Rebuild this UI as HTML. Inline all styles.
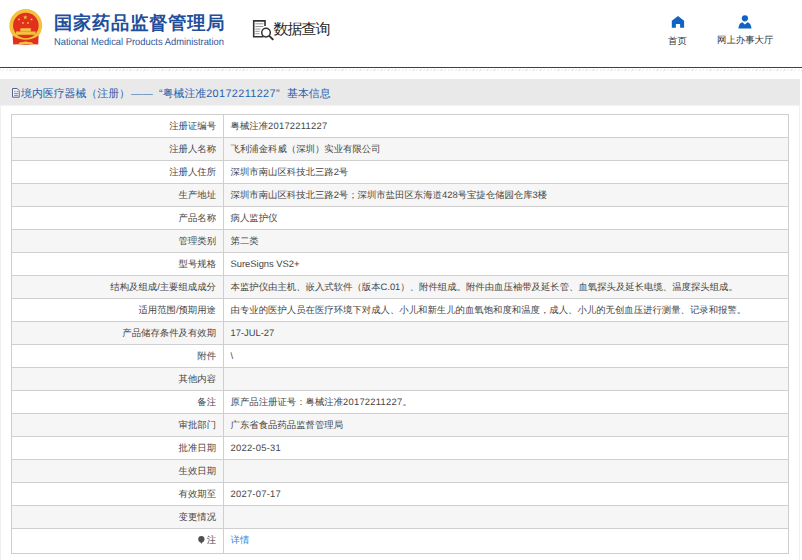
<!DOCTYPE html>
<html><head><meta charset="utf-8">
<style>
*{margin:0;padding:0;box-sizing:border-box}
html,body{text-rendering:geometricPrecision;width:802px;height:560px;overflow:hidden;background:#fff;font-family:"Liberation Sans",sans-serif;color:#333}
.abs{position:absolute;white-space:nowrap}
svg.abs{left:0;top:0;overflow:visible;z-index:5}
#t1{left:54px;top:11.5px;font-size:18.2px;font-weight:900;color:#1f4f9c;letter-spacing:0.85px;line-height:22px}
#t2{left:54.4px;top:37.3px;font-size:10px;color:#2f5597;line-height:12px;transform-origin:0 0;transform:scaleX(0.935)}
#t3{left:273.5px;top:18.5px;font-size:15px;letter-spacing:-1px;color:#262626;line-height:22px}
#t4{left:668px;top:34.7px;font-size:9.4px;color:#333;line-height:12px}
#t5{left:717px;top:34px;font-size:9.4px;color:#333;line-height:12px}
#bline{left:0;top:67px;width:802px;height:1px;background:#1b4572}
#dash{left:0;top:69px;width:802px;height:2px;background:repeating-linear-gradient(135deg,#e6e6e6 0 1px,#fff 1px 2.5px)}
#band{left:0;top:79px;width:800px;height:27px;background:linear-gradient(#e9e9e9 26px,#f3f3f3 26px)}
.t6{top:86.5px;font-size:10.9px;color:#2760ae;line-height:14px}
#box{left:0;top:106px;width:800px;height:460px;border-left:1px solid #efefef;border-right:1px solid #efefef;background:#fff}
table{position:absolute;left:11px;top:114px;width:778px;border-collapse:collapse;font-size:9.4px;color:#454545}
td{border:1px solid #cfcfcf;height:23px;padding:0 0 1px 0;white-space:nowrap;line-height:12px}
td.l{width:212px;text-align:right;padding-right:7px}
td.v{padding-left:6.5px}
tr:nth-child(even) td{background:#f6f6f6}
tr.last td{height:25px;padding-bottom:2px}
a{color:#3a86db;text-decoration:none}
.n{letter-spacing:0.25px}
</style></head><body>
<svg class="abs" width="802" height="110">
  <!-- emblem -->
  <circle cx="25.75" cy="25.5" r="16.4" fill="#f4c13f"/>
  <path d="M12.6 35.4Q25.8 44 38.6 35.4L38.2 44.6Q33 43.6 26 45Q19 43.6 13.2 44.6Z" fill="#e2301e"/>
  <circle cx="25.85" cy="25.5" r="12.8" fill="#e2301e"/>
  <path d="M20.4 31.6V29.4L19.6 29.4L21 28.3H30.3L31.6 29.4L30.8 29.4V31.6Z" fill="#f4c13f"/>
  <rect x="16" y="31.5" width="19.6" height="3.3" fill="#f4c13f"/>
  <path d="M18 44.9Q19 41.6 22.5 42.2Q25.8 40.8 29 42.2Q32.6 41.6 33.4 44.9Q30 43.6 25.8 44.4Q21.6 43.6 18 44.9Z" fill="#f4c13f"/>
  <path d="M25.3 14.9L25.95 16.5L27.5 16.6L26.3 17.6L26.7 19.2L25.3 18.3L23.9 19.2L24.3 17.6L23.1 16.6L24.65 16.5Z" fill="#f4c13f"/>
  <circle cx="19" cy="19.4" r="0.95" fill="#f4c13f"/>
  <circle cx="31.5" cy="19.4" r="0.95" fill="#f4c13f"/>
  <circle cx="22.9" cy="22.9" r="0.95" fill="#f4c13f"/>
  <circle cx="28" cy="22.9" r="0.95" fill="#f4c13f"/>
  <!-- search doc icon -->
  <path d="M265 26V20.9H253.7V36.7H263.5" fill="none" stroke="#333" stroke-width="1.6"/>
  <path d="M255.3 23.8H263.4M255.3 26.5H263.4M255.3 29H260.5M255.3 31.3H259.5M255.3 33.7H259.5" stroke="#888" stroke-width="0.9"/>
  <circle cx="266" cy="32.6" r="4.3" fill="#fff" stroke="#333" stroke-width="1.5"/>
  <path d="M269 35.6L273.3 39.9" stroke="#333" stroke-width="2"/>
  <!-- home -->
  <path d="M678 16L684.1 20.7V27.7H680.1V23.9H675.9V27.7H671.8V20.7Z" fill="#1163c3"/>
  <!-- user -->
  <circle cx="744.9" cy="18.3" r="3.1" fill="#1163c3"/>
  <path d="M738.4 28.6Q738.8 23 742.3 22.2L744.9 24.6L747.5 22.2Q751.1 23 751.5 28.6Z" fill="#1163c3"/>
  <!-- section doc icon -->
  <path d="M12.5 88.5H17.2L19.2 90.6V97.2H12.5Z" fill="#f4f6fa" stroke="#56648a" stroke-width="1"/>
  <path d="M14.1 91.3H15.5M16.5 91.3H17.9M14.1 93.4H17.9M14.1 95.4H17.9" stroke="#56648a" stroke-width="0.8"/>
</svg>
<div id="t1" class="abs">国家药品监督管理局</div>
<div id="t2" class="abs">National Medical Products Administration</div>
<div id="t3" class="abs">数据查询</div>
<div id="t4" class="abs">首页</div>
<div id="t5" class="abs">网上办事大厅</div>
<div id="bline" class="abs"></div>
<div id="dash" class="abs"></div>
<div id="band" class="abs"></div>
<div class="abs t6" style="left:21px">境内医疗器械（注册）</div>
<div class="abs t6" style="left:131px">——</div>
<div class="abs t6" style="left:159px">“粤械注准<span style="letter-spacing:0.35px">20172211227</span>”</div>
<div class="abs t6" style="left:287px">基本信息</div>
<div id="box" class="abs"></div>
<table>
<tr><td class="l">注册证编号</td><td class="v">粤械注准<span class="n">20172211227</span></td></tr>
<tr><td class="l">注册人名称</td><td class="v">飞利浦金科威（深圳）实业有限公司</td></tr>
<tr><td class="l">注册人住所</td><td class="v">深圳市南山区科技北三路2号</td></tr>
<tr><td class="l">生产地址</td><td class="v">深圳市南山区科技北三路2号；深圳市盐田区东海道428号宝捷仓储园仓库3楼</td></tr>
<tr><td class="l">产品名称</td><td class="v">病人监护仪</td></tr>
<tr><td class="l">管理类别</td><td class="v">第二类</td></tr>
<tr><td class="l">型号规格</td><td class="v">SureSigns VS2+</td></tr>
<tr><td class="l">结构及组成/主要组成成分</td><td class="v">本监护仪由主机、嵌入式软件（版本C.01）、附件组成。附件由血压袖带及延长管、血氧探头及延长电缆、温度探头组成。</td></tr>
<tr><td class="l">适用范围/预期用途</td><td class="v">由专业的医护人员在医疗环境下对成人、小儿和新生儿的血氧饱和度和温度，成人、小儿的无创血压进行测量、记录和报警。</td></tr>
<tr><td class="l">产品储存条件及有效期</td><td class="v">17-JUL-27</td></tr>
<tr><td class="l">附件</td><td class="v">\</td></tr>
<tr><td class="l">其他内容</td><td class="v"></td></tr>
<tr><td class="l">备注</td><td class="v">原产品注册证号：粤械注准<span class="n">20172211227</span>。</td></tr>
<tr><td class="l">审批部门</td><td class="v">广东省食品药品监督管理局</td></tr>
<tr><td class="l">批准日期</td><td class="v"><span class="n">2022-05-31</span></td></tr>
<tr><td class="l">生效日期</td><td class="v"></td></tr>
<tr><td class="l">有效期至</td><td class="v"><span class="n">2027-07-17</span></td></tr>
<tr><td class="l">变更情况</td><td class="v"></td></tr>
<tr class="last"><td class="l"><svg width="7" height="8" viewBox="0 0 7 8" style="vertical-align:-0.5px;margin-right:1.5px"><circle cx="3.35" cy="3.2" r="3.1" fill="#505050"/><path d="M2 5.6L3.35 7.9L4.7 5.6Z" fill="#505050"/></svg>注</td><td class="v"><a>详情</a></td></tr>
</table>
</body></html>
